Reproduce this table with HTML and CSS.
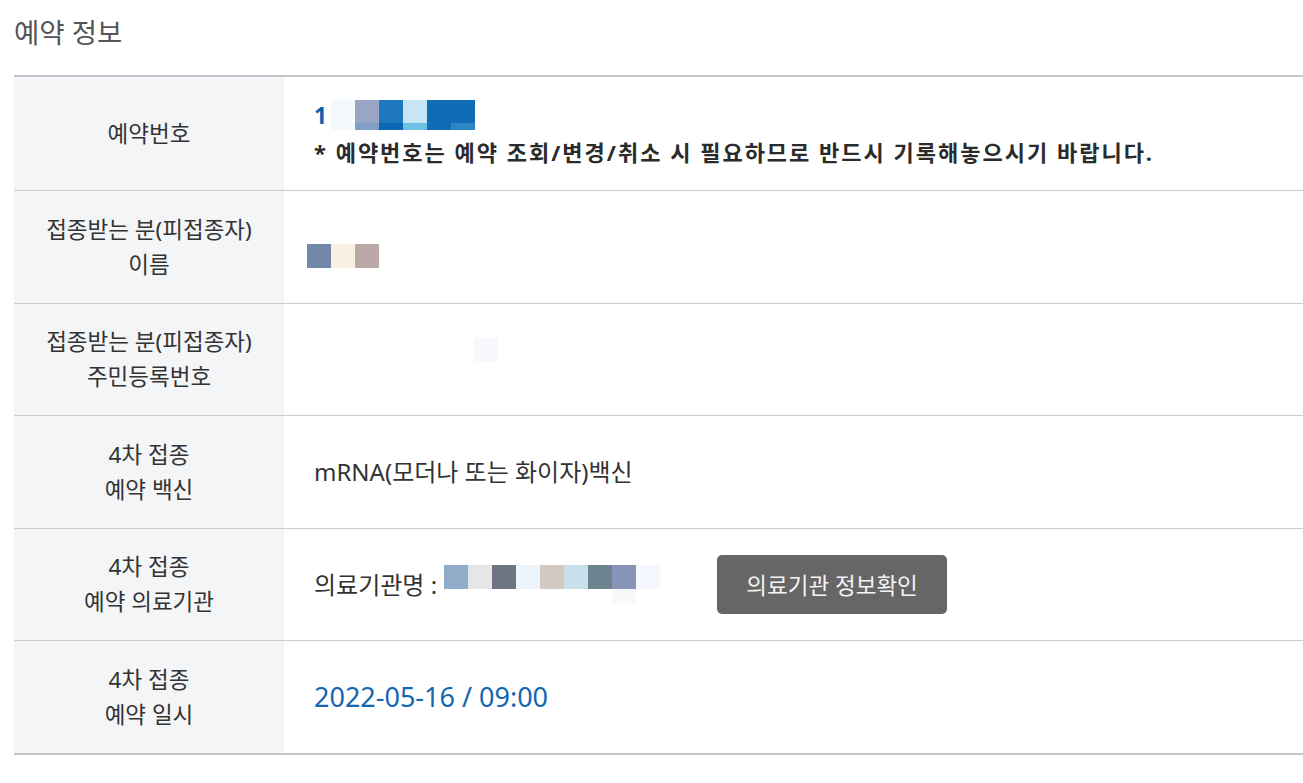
FILE: index.html
```html
<!DOCTYPE html>
<html lang="ko">
<head>
<meta charset="utf-8">
<title>예약 정보</title>
<link rel="stylesheet" href="styles.css">
</head>
<body>
<div class="page">
  <h2 class="title">예약 정보</h2>
  <div class="info">
    <div class="row row-first">
      <div class="label">예약번호</div>
      <div class="value">
        <div class="line-num">
          <span class="num">1</span>
          <span class="mosaic mosaic-num">
            <i class="m a1"></i><i class="m a2"></i><i class="m a3"></i><i class="m a4"></i><i class="m a5"></i><i class="m a5"></i>
            <i class="m a1"></i><i class="m b2"></i><i class="m b3"></i><i class="m b4"></i><i class="m a5"></i><i class="m b6"></i>
          </span>
        </div>
        <p class="notice">* 예약번호는 예약 조회/변경/취소 시 필요하므로 반드시 기록해놓으시기 바랍니다.</p>
      </div>
    </div>
    <div class="row">
      <div class="label">접종받는 분(피접종자)<br>이름</div>
      <div class="value">
        <span class="mosaic mosaic-name">
          <i class="m n1"></i><i class="m n2"></i><i class="m n3"></i>
        </span>
      </div>
    </div>
    <div class="row">
      <div class="label">접종받는 분(피접종자)<br>주민등록번호</div>
      <div class="value">
        <span class="mosaic mosaic-rrn"><i class="m r1"></i></span>
      </div>
    </div>
    <div class="row">
      <div class="label">4차 접종<br>예약 백신</div>
      <div class="value">
        <p class="text">mRNA(모더나 또는 화이자)백신</p>
      </div>
    </div>
    <div class="row">
      <div class="label">4차 접종<br>예약 의료기관</div>
      <div class="value">
        <div class="line-org">
          <span class="text">의료기관명 :</span>
          <span class="mosaic mosaic-org">
            <i class="m o1"></i><i class="m o2"></i><i class="m o3"></i><i class="m o4"></i><i class="m o5"></i><i class="m o6"></i><i class="m o7"></i><i class="m o8"></i><i class="m o9"></i>
            <i class="m"></i><i class="m"></i><i class="m"></i><i class="m"></i><i class="m"></i><i class="m"></i><i class="m"></i><i class="m o10"></i><i class="m"></i>
          </span>
          <button class="btn" type="button">의료기관 정보확인</button>
        </div>
      </div>
    </div>
    <div class="row">
      <div class="label">4차 접종<br>예약 일시</div>
      <div class="value">
        <p class="date">2022-05-16 / 09:00</p>
      </div>
    </div>
  </div>
</div>
</body>
</html>
```

FILE: styles.css
```css
* { box-sizing: border-box; }

body {
  margin: 0;
  font-family: "Noto Sans", "Noto Sans CJK KR", sans-serif;
  color: #333;
  background: #fff;
}

.page {
  padding-left: 14px;
}

.title {
  margin: 15px 0 24px;
  font-size: 27.5px;
  line-height: 36px;
  font-weight: 400;
  color: #555;
}

.info {
  border-top: 2px solid #c3c5cc;
  border-bottom: 2px solid #c3c5cc;
}

.row {
  display: grid;
  grid-template-columns: 270px 1fr;
  min-height: 112.5px;
  border-bottom: 1px solid #c9cad0;
}

.row-first {
  min-height: 114px;
}

.row:last-child {
  border-bottom: none;
  min-height: 111.5px;
}

.label {
  display: flex;
  align-items: center;
  justify-content: center;
  text-align: center;
  background: #f4f5f7;
  font-size: 22.5px;
  line-height: 35px;
  color: #333;
}

.value {
  display: flex;
  flex-direction: column;
  justify-content: center;
  padding-left: 30px;
  font-size: 24px;
  line-height: 37px;
}

.value p { margin: 0; }

.line-num {
  display: flex;
  align-items: center;
  height: 37px;
}

.num {
  font-weight: 700;
  font-size: 23px;
  color: #0d62b0;
}

.notice {
  font-weight: 700;
  font-size: 22px;
  letter-spacing: 2px;
  color: #2b2b2b;
}

.mosaic {
  display: inline-grid;
  grid-auto-columns: 24px;
}

.m {
  display: block;
}

.mosaic-num {
  margin-left: 4px;
  grid-template-columns: repeat(6, 24px);
  grid-template-rows: 23px 7px;
}

.a1 { background: #f3f9fd; }
.a2 { background: #9aa5c4; }
.a3 { background: #1e78bd; }
.a4 { background: #c7e5f5; }
.a5 { background: #0f6cb6; }
.b2 { background: #7f9fc6; }
.b3 { background: #0a68b5; }
.b4 { background: #6fc0e6; }
.b6 { background: #2d85c6; }

.mosaic-name {
  align-self: flex-start;
  margin-left: -7px;
  margin-top: 19px;
  grid-template-columns: repeat(3, 24px);
  grid-template-rows: 24px;
}

.n1 { background: #7287a9; }
.n2 { background: #f8f1e2; }
.n3 { background: #bca9a7; }

.mosaic-rrn {
  align-self: flex-start;
  margin-left: 160px;
  margin-top: -18px;
  grid-template-columns: 24px;
  grid-template-rows: 24px;
}

.r1 { background: #f8f9fd; }

.line-org {
  display: flex;
  align-items: center;
}

.mosaic-org {
  margin-left: 7px;
  grid-template-columns: repeat(9, 24px);
  grid-template-rows: 24px 15px;
}

.o1 { background: #8fadc8; }
.o2 { background: #e6e6e6; }
.o3 { background: #6f7485; }
.o4 { background: #eef4fc; }
.o5 { background: #d2c9c3; }
.o6 { background: #c7e0ec; }
.o7 { background: #6c8390; }
.o8 { background: #8894b8; }
.o9 { background: #f5f9ff; }
.o10 { background: #f8f9fb; }

.btn {
  margin-left: 57px;
  width: 230px;
  height: 59px;
  border: none;
  border-radius: 5px;
  background: #666;
  color: #f4f4f4;
  font-family: "Noto Sans", "Noto Sans CJK KR", sans-serif;
  font-size: 22.5px;
  padding: 0;
  cursor: pointer;
}

.date {
  font-size: 27px;
  color: #1466b3;
  line-height: 37px;
}
```
